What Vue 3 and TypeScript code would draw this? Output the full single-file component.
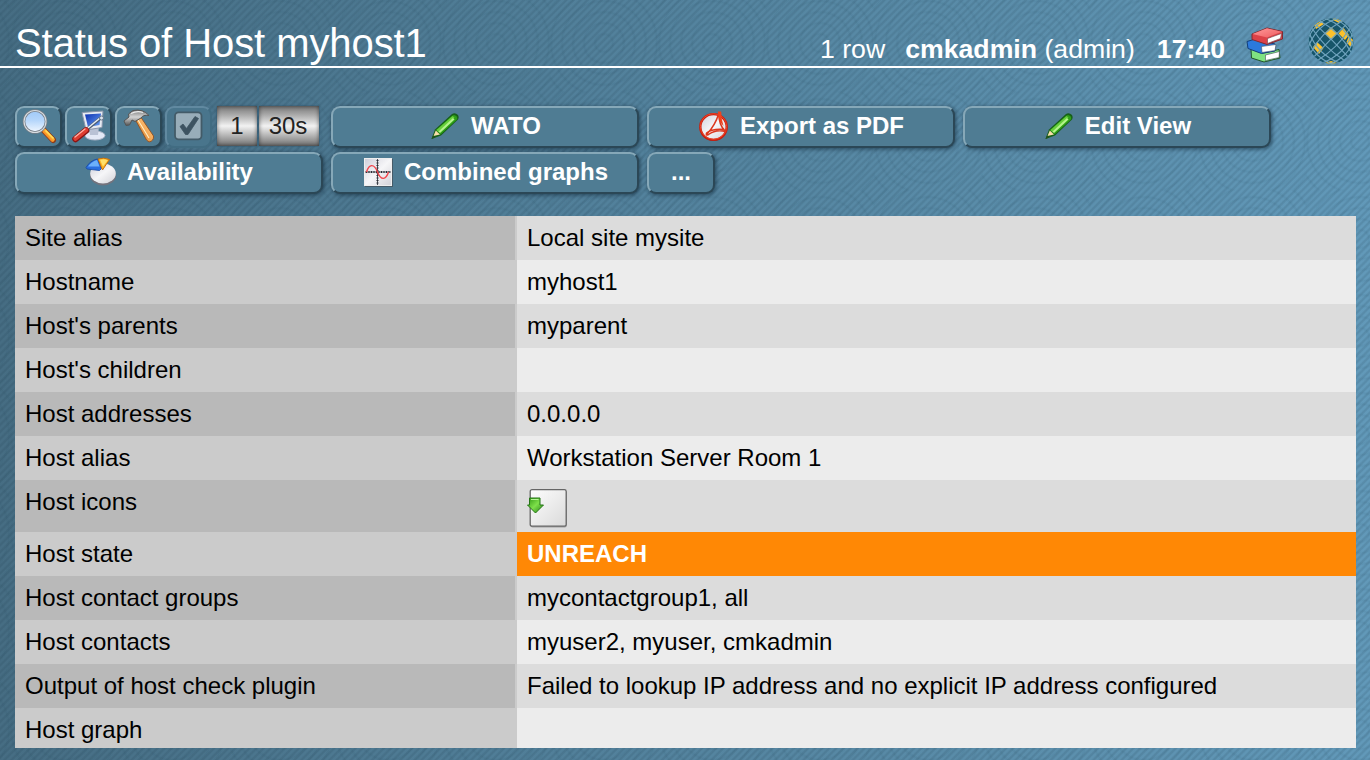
<script setup lang="ts">
interface ContextLink {
  label: string
  icon: 'pencil' | 'pdf' | 'pie' | 'graph' | ''
}

interface HostRow {
  label: string
  value: string
  kind?: 'icons' | 'state'
}

const links: ContextLink[] = [
  { label: 'WATO', icon: 'pencil' },
  { label: 'Export as PDF', icon: 'pdf' },
  { label: 'Edit View', icon: 'pencil' },
  { label: 'Availability', icon: 'pie' },
  { label: 'Combined graphs', icon: 'graph' },
  { label: '...', icon: '' },
]

const rows: HostRow[] = [
  { label: 'Site alias', value: 'Local site mysite' },
  { label: 'Hostname', value: 'myhost1' },
  { label: "Host's parents", value: 'myparent' },
  { label: "Host's children", value: '' },
  { label: 'Host addresses', value: '0.0.0.0' },
  { label: 'Host alias', value: 'Workstation Server Room 1' },
  { label: 'Host icons', value: '', kind: 'icons' },
  { label: 'Host state', value: 'UNREACH', kind: 'state' },
  { label: 'Host contact groups', value: 'mycontactgroup1, all' },
  { label: 'Host contacts', value: 'myuser2, myuser, cmkadmin' },
  { label: 'Output of host check plugin', value: 'Failed to lookup IP address and no explicit IP address configured' },
  { label: 'Host graph', value: '' },
]

const globeLines: number[] = [-21, -16.5, -9.6, -1.3, 7, 14.3, 19.5]
</script>

<template>
  <div class="page">
    <svg class="defs" width="0" height="0" aria-hidden="true">
      <defs>
        <linearGradient id="lens" x1="0" y1="0" x2="0" y2="1">
          <stop offset="0" stop-color="#9fc9f8" />
          <stop offset="0.45" stop-color="#b5d6fb" />
          <stop offset="1" stop-color="#f2f8ff" />
        </linearGradient>
        <linearGradient id="orange" x1="0" y1="1" x2="1" y2="0">
          <stop offset="0" stop-color="#d9541e" />
          <stop offset="0.5" stop-color="#ffa52c" />
          <stop offset="1" stop-color="#ffd257" />
        </linearGradient>
        <linearGradient id="wood" x1="0" y1="1" x2="1" y2="0">
          <stop offset="0" stop-color="#b4661f" />
          <stop offset="0.5" stop-color="#f5a956" />
          <stop offset="1" stop-color="#ffd9a0" />
        </linearGradient>
        <linearGradient id="steel" x1="0" y1="0" x2="0" y2="1">
          <stop offset="0" stop-color="#777" />
          <stop offset="0.45" stop-color="#d4d4d4" />
          <stop offset="1" stop-color="#555" />
        </linearGradient>
        <linearGradient id="screen" x1="0" y1="0" x2="1" y2="1">
          <stop offset="0" stop-color="#0b2fb0" />
          <stop offset="1" stop-color="#6aa2f4" />
        </linearGradient>
        <linearGradient id="green" x1="0" y1="0" x2="1" y2="1">
          <stop offset="0" stop-color="#2f9812" />
          <stop offset="0.5" stop-color="#7ee04a" />
          <stop offset="1" stop-color="#1d7a12" />
        </linearGradient>
        <linearGradient id="plate" x1="0" y1="0" x2="1" y2="1">
          <stop offset="0" stop-color="#cfcfda" />
          <stop offset="0.5" stop-color="#f6f6f8" />
          <stop offset="1" stop-color="#d2d2d8" />
        </linearGradient>
        <linearGradient id="box" x1="0" y1="0" x2="1" y2="1">
          <stop offset="0" stop-color="#fdfdfd" />
          <stop offset="1" stop-color="#dadada" />
        </linearGradient>
        <linearGradient id="redbook" x1="0" y1="0" x2="1" y2="1">
          <stop offset="0" stop-color="#ff9a9a" />
          <stop offset="1" stop-color="#ee5a5e" />
        </linearGradient>
      </defs>
    </svg>

    <header class="header">
      <h1 class="title">Status of Host myhost1</h1>
      <div class="info">
        <span class="count">1 row</span>
        <span class="user"><b>cmkadmin</b> (admin)</span>
        <b class="clock">17:40</b>
        <svg class="books" viewBox="0 0 40 38">
          <g stroke-linejoin="round" stroke-width="1">
            <path d="M5 23L17 27L33 23.500L34 32L18 36L5.500 32Z" fill="#7fe281" stroke="#20552a" />
            <path d="M19.500 29L33.500 25.500L33 31.500L19.500 34.500Z" fill="#fff" stroke="#46515a" stroke-width=".6" />
            <path d="M1 15.500L9 13L29 18V25L15.500 27.500L2 22.500Z" fill="#2b79dc" stroke="#123e79" />
            <path d="M15.500 20.500L30 18.500L29 24.500L16 26.500Z" fill="#fff" stroke="#42536a" stroke-width=".6" />
            <path d="M6 8L21 2L36.500 5.500V13L21 18.500L6 13.500Z" fill="#dc4248" stroke="#812a30" />
            <path d="M6.500 8L21 2.300L36 5.800L21 11.500Z" fill="url(#redbook)" />
            <path d="M21.500 12.500L35.500 7.500L34.500 12.500L21.500 17.500Z" fill="#fff" stroke="#694148" stroke-width=".6" />
          </g>
        </svg>
        <svg class="globe" viewBox="-23 -23 46 46">
          <defs><clipPath id="ball"><circle r="22.700" /></clipPath></defs>
          <g clip-path="url(#ball)">
            <circle r="23" fill="#17556a" />
            <g fill="#fcc12b">
              <path d="M0-14L6.500-7.500L0-1L-6.500-7.500Z" />
              <path d="M12.500-13L18-6L14-1L7.500-7.500Z" />
              <path d="M18-5L22-1L19.500 6L15.500 1Z" />
              <path d="M-14 1L-7.500 7L-12 13L-18 6Z" />
              <path d="M-17-16L-10-20L-7-17L-15-12Z" />
              <path d="M3-24L12-20L8-18L2-21Z" />
              <path d="M-6 22L0 20L6 22L0 24Z" />
            </g>
            <g transform="rotate(45)" fill="none" stroke="#6fa3bd" stroke-width="1.200">
              <path v-for="v in globeLines" :key="'h' + v" :d="`M-23 ${v * 0.62}Q0 ${v * 1.38} 23 ${v * 0.62}`" />
              <path v-for="v in globeLines" :key="'v' + v" :d="`M${v * 0.62} -23Q${v * 1.38} 0 ${v * 0.62} 23`" />
            </g>
          </g>
        </svg>
      </div>
    </header>

    <nav class="context">
      <div class="tools">
        <span class="tool">
          <svg viewBox="17 108 43 38">
            <path d="M43.500 130L53 140" stroke="#8b3a18" stroke-width="6" stroke-linecap="round" />
            <path d="M44.500 131L52.500 139.500" stroke="url(#orange)" stroke-width="4.500" stroke-linecap="round" />
            <path d="M45.500 130.500L53.500 138.500" stroke="#ffdf5a" stroke-width="1.500" />
            <circle cx="35" cy="121.500" r="11" fill="url(#lens)" stroke="#777e86" stroke-width="2.600" />
            <circle cx="35" cy="121.500" r="11" fill="none" stroke="#d8dde2" stroke-width="1.100" />
          </svg>
        </span>
        <span class="tool">
          <svg viewBox="67 108 43 38">
            <ellipse cx="95" cy="135.500" rx="10" ry="4.500" fill="#e3e9f6" stroke="#a9b2c4" />
            <path d="M89 127L99 126L98 135H90Z" fill="#b9c2d5" />
            <path d="M82 112.500L103 111L102 127.500L86 130Z" fill="#e6eaf2" stroke="#8995aa" />
            <path d="M85 114.500L101 113.500L99.500 125L88 127Z" fill="url(#screen)" />
            <path d="M86 130L100 118.500" stroke="#4e5d70" stroke-width="3" />
            <path d="M86 129.500L100 118" stroke="#e6edf4" stroke-width="1.600" />
            <circle cx="101.500" cy="118" r="2" fill="#dce5ee" stroke="#66778a" />
            <path d="M75.500 139L86 130.500" stroke="#8a1414" stroke-width="6.500" stroke-linecap="round" />
            <path d="M75.500 138.500L86 130" stroke="#de3d31" stroke-width="4.500" stroke-linecap="round" />
            <path d="M75 137L85 129" stroke="#ffb2a6" stroke-width="1.300" stroke-linecap="round" />
          </svg>
        </span>
        <span class="tool">
          <svg viewBox="117 108 43 38">
            <path d="M135.500 120L141 117.500L153.500 136Q154 141 149 142L146.500 140Z" fill="url(#wood)" stroke="#92501f" stroke-width=".9" />
            <path d="M138 120L149 138" stroke="#fff0c9" stroke-width="1.100" />
            <path d="M124 121L129 117L128.500 114L133 110.500Q143 108.500 149 115.500Q143 114.500 141 118L135 121.500L132 120L129.500 125L126 125.500Z" fill="url(#steel)" stroke="#555" stroke-width="1" />
            <path d="M131 113.500Q137 110.500 143 112.500" stroke="#eee" stroke-width="1.200" fill="none" />
          </svg>
        </span>
        <span class="tool dim">
          <svg viewBox="167 108 43 38">
            <rect x="175" y="112.300" width="26.500" height="27" rx="3.500" fill="#98adb9" stroke="#435b68" stroke-width="1.800" />
            <path d="M180 126.500L183 124L186.500 128.500L195 116.500L198.500 118.500L188 134.500H185.500Z" fill="#3d5361" stroke="#3d5361" stroke-width=".8" stroke-linejoin="round" />
          </svg>
        </span>
        <span class="field short">1</span>
        <span class="field long">30s</span>
      </div>

      <a v-for="link in links" :key="link.label" class="link" :class="{ more: !link.icon }">
        <svg v-if="link.icon === 'pencil'" viewBox="0 0 32 32">
          <path d="M2.500 29L6 19.500L23 4Q26 2 29 5Q30.500 8 28.500 10L12 25.500Z" fill="#175f19" />
          <path d="M7 20L23.500 5.500Q25.500 4 27.800 6.500Q29 8.500 27.500 10L11.500 24.500Z" fill="#2e9f17" />
          <path d="M7.500 20L23.500 6L25.500 7.500L9.500 22Z" fill="#68cf3c" />
          <path d="M9.500 21.500L24 8L25.500 9.500L11 23Z" fill="#b4f48c" />
          <path d="M4.500 26L6.800 20.500L11 24.500Z" fill="#f9dfaa" />
          <path d="M2.500 29L4 25.300L6.300 27.500Z" fill="#22531d" />
        </svg>
        <svg v-else-if="link.icon === 'pdf'" viewBox="0 0 32 32">
          <ellipse cx="15.500" cy="18" rx="13.200" ry="13" fill="#5d1210" opacity=".6" />
          <ellipse cx="15.500" cy="17" rx="13.200" ry="12.900" fill="url(#plate)" stroke="#c8200f" stroke-width="2.400" />
          <ellipse cx="15.500" cy="16.500" rx="13.200" ry="12.800" fill="none" stroke="#f04429" stroke-width="1" />
          <path d="M8.500 24.500Q17 16 21 3Q20.500 15 27.500 21.500Q18 19 10.500 24.500Q7.500 26 8.500 23Q14 18.500 26 19.500" fill="none" stroke="#db371e" stroke-width="1.500" stroke-linejoin="round" />
          <path d="M19.800 1.500H23.200L23.800 9L25.500 16L22 12L20.500 7Z" fill="#ee421e" />
        </svg>
        <svg v-else-if="link.icon === 'pie'" viewBox="0 0 32 32">
          <ellipse cx="18" cy="19.500" rx="13" ry="10" fill="#73737d" />
          <ellipse cx="18" cy="17.500" rx="12.800" ry="10" fill="url(#plate)" />
          <path d="M1 11.500Q5 4.500 12.500 3L16.500 12.500L14.500 14.500L2 13Z" fill="#2a6fe0" stroke="#1546a0" stroke-width=".8" />
          <path d="M3 10.500Q6.500 5.500 12 4L14.500 10.500Z" fill="#6cb0fb" />
          <path d="M13 3Q18.500 1 24.500 3.500L17.500 14Z" fill="#fbb321" stroke="#c06a0c" stroke-width=".9" />
          <path d="M15 3.800Q19 2.600 22.800 4.200L18 10.500Z" fill="#ffe06b" />
        </svg>
        <svg v-else-if="link.icon === 'graph'" viewBox="0 0 32 32">
          <rect x="3" y="3" width="28" height="28" fill="#465b68" />
          <rect x="2.500" y="2.500" width="27" height="27" fill="url(#plate)" stroke="#eee" />
          <path d="M3 16H29M15.500 3V29" stroke="#3a3e46" stroke-width=".9" />
          <path d="M4 16H28M15.500 4V28" stroke="#2a2e36" stroke-width="2" stroke-dasharray="1 1.500" />
          <path d="M4.500 16C7 8 12 7 15.500 16S24 24 26.500 16" fill="none" stroke="#f2454b" stroke-width="1.400" />
        </svg>
        <span>{{ link.label }}</span>
      </a>
    </nav>

    <main class="data">
      <div v-for="row in rows" :key="row.label" class="row" :class="row.kind">
        <div class="label">{{ row.label }}</div>
        <div class="value">
          <svg v-if="row.kind === 'icons'" viewBox="0 0 40 40">
            <rect x="3.700" y="2.500" width="36" height="37" rx="2" fill="#555" opacity=".45" />
            <rect x="3.200" y="1.700" width="36" height="36.500" rx="1.800" fill="url(#box)" stroke="#666" stroke-width="1.300" />
            <path d="M2.500 10H13V17H16.500L8.500 25L.5 17H2.500Z" fill="url(#green)" stroke="#257516" stroke-width="1" stroke-linejoin="round" />
            <path d="M4 11.500H11.500" stroke="#b8f59a" stroke-width="1" />
          </svg>
          <template v-else>{{ row.value }}</template>
        </div>
      </div>
    </main>
  </div>
</template>

<style>
body {
  margin: 0;
  overflow: hidden;
}
</style>

<style scoped>
.page {
  box-sizing: border-box;
  width: 1370px;
  height: 760px;
  overflow: hidden;
  font-family: "Liberation Sans", Arial, sans-serif;
  font-size: 24px;
  color: #000;
  background:
    repeating-linear-gradient(135deg, rgba(24, 52, 70, 0.13) 0, rgba(24, 52, 70, 0.13) 1px, transparent 2.3px, transparent 3.6px, rgba(24, 52, 70, 0.13) 5px),
    repeating-radial-gradient(circle at 50% 50%, rgba(20, 60, 80, 0) 0, rgba(20, 60, 80, 0) 7px, rgba(20, 60, 80, 0.07) 9px, rgba(20, 60, 80, 0) 11px) 10px -6px / 108px 98px,
    linear-gradient(90deg, #466d83 0%, #517f99 40%, #5b8eab 75%, #6299b9 100%);
}

.defs {
  display: block;
}

.header {
  box-sizing: border-box;
  height: 68px;
  border-bottom: 2px solid #fff;
  padding: 0 16px 0 15px;
  display: flex;
  justify-content: space-between;
  color: #fff;
}

.title {
  margin: 20px 0 0;
  font-size: 40px;
  font-weight: normal;
  line-height: 46px;
  letter-spacing: -0.08px;
  white-space: nowrap;
}

.info {
  display: flex;
  align-items: flex-start;
  font-size: 26.67px;
  line-height: 30px;
  white-space: nowrap;
}

.count,
.user,
.clock {
  margin-top: 34px;
}

.user {
  margin-left: 20px;
}

.clock {
  margin-left: 22px;
}

.books {
  width: 40px;
  height: 38px;
  margin: 26px 0 0 21px;
}

.globe {
  width: 46px;
  height: 46px;
  margin: 18px 0 0 22px;
}

.context {
  margin: 38px 0 0 15px;
  width: 1290px;
  display: flex;
  flex-wrap: wrap;
  gap: 4px 8px;
}

.tools {
  width: 308px;
  height: 42px;
  display: flex;
  gap: 3px;
}

.tool,
.link {
  box-sizing: border-box;
  height: 42px;
  border: 2px solid;
  border-color: #86a8b8 #2b4756 #2b4756 #86a8b8;
  border-radius: 9px;
  background: #4f7c93;
  box-shadow: 1px 1px 4px rgba(0, 20, 35, 0.55);
}

.tool {
  width: 47px;
  flex: none;
}

.tool svg {
  display: block;
  width: 43px;
  height: 38px;
}

.tool.dim {
  border-color: #6189a0 #416c82 #416c82 #6189a0;
  background: #49758c;
  box-shadow: none;
}

.field {
  box-sizing: border-box;
  flex: none;
  height: 40px;
  line-height: 40px;
  text-align: center;
  color: #222;
  background: linear-gradient(#777 0%, #aaa 22%, #f2f2f2 50%, #aaa 78%, #707070 100%);
  box-shadow: inset 0 0 4px rgba(0, 0, 0, 0.55), 0 0 2px #294c61;
}

.short {
  width: 40px;
  margin-left: 2px;
}

.long {
  width: 60px;
  margin-left: -1px;
  padding-right: 2px;
}

.link {
  width: 308px;
  display: flex;
  align-items: center;
  justify-content: center;
  gap: 10px;
  padding-bottom: 2px;
  font-weight: bold;
  color: #fff;
}

.link svg {
  width: 32px;
  height: 32px;
}

.link.more {
  width: 68px;
}

.data {
  margin: 22px 14px 0 15px;
  height: 532px;
  overflow: hidden;
}

.row {
  height: 44px;
  display: grid;
  grid-template-columns: 500px 1fr;
  gap: 2px;
  line-height: 44px;
  white-space: nowrap;
  background: #cbcbcb;
}

.row.icons {
  height: 52px;
}

.label,
.value {
  padding-left: 10px;
}

.row:nth-child(odd) .label {
  background: #b9b9b9;
}

.row:nth-child(even) .label {
  background: #cbcbcb;
}

.row:nth-child(odd) .value {
  background: #dcdcdc;
}

.row:nth-child(even) .value {
  background: #ececec;
}

.row.state .value {
  background: #ff8805;
  color: #fff;
  font-weight: bold;
}

.value svg {
  display: block;
  width: 40px;
  height: 40px;
  margin-top: 8px;
}
</style>
